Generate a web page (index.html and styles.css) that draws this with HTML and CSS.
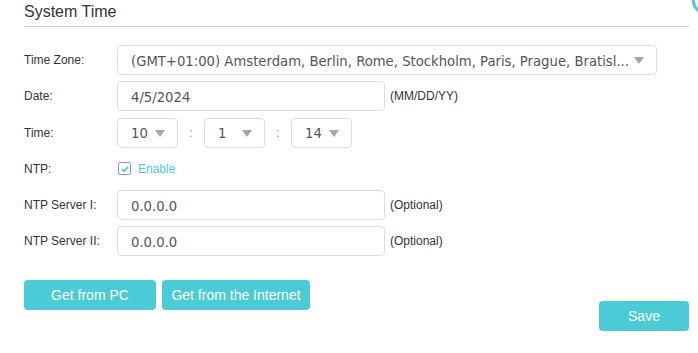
FILE: index.html
```html
<!DOCTYPE html>
<html lang="en">
<head>
  <meta charset="UTF-8">
  <title>System Time</title>
  <link rel="stylesheet" href="styles.css">
</head>
<body>

  <div class="panel">
    <!-- Header -->
    <h2 class="title">System Time</h2>
    <span class="help-icon"></span>

    <!-- Settings Form -->
    <div class="form">
      <div class="row">
        <label>Time Zone:</label>
        <div class="select wide">
          <span class="value">(GMT+01:00) Amsterdam, Berlin, Rome, Stockholm, Paris, Prague, Bratisl...</span>
          <span class="arrow"></span>
        </div>
      </div>

      <div class="row">
        <label>Date:</label>
        <div class="input">4/5/2024</div>
        <span class="hint">(MM/DD/YY)</span>
      </div>

      <div class="row">
        <label>Time:</label>
        <div class="select small">
          <span class="value">10</span>
          <span class="arrow"></span>
        </div>
        <span class="colon">:</span>
        <div class="select small">
          <span class="value">1</span>
          <span class="arrow"></span>
        </div>
        <span class="colon">:</span>
        <div class="select small">
          <span class="value">14</span>
          <span class="arrow"></span>
        </div>
      </div>

      <div class="row">
        <label>NTP:</label>
        <span class="checkbox">
          <svg width="10" height="10" viewBox="0 0 10 10"><path d="M2 5.2 L4.2 7.3 L8 2.8" fill="none" stroke="#4acbd6" stroke-width="1.8"/></svg>
        </span>
        <span class="check-label">Enable</span>
      </div>

      <div class="row">
        <label>NTP Server I:</label>
        <div class="input">0.0.0.0</div>
        <span class="hint">(Optional)</span>
      </div>

      <div class="row">
        <label>NTP Server II:</label>
        <div class="input">0.0.0.0</div>
        <span class="hint">(Optional)</span>
      </div>
    </div>

    <!-- Action Buttons -->
    <div class="actions">
      <a href="#" class="button pc">Get from PC</a>
      <a href="#" class="button internet">Get from the Internet</a>
    </div>

    <div class="footer">
      <a href="#" class="button save">Save</a>
    </div>
  </div>

</body>
</html>
```

FILE: styles.css
```css
/* Basic Styles */
body {
  font-family: "Liberation Sans", Arial, sans-serif;
  margin: 0;
  padding: 0;
  background-color: #fff;
  color: #333;
  overflow: hidden;
}

.panel {
  position: relative;
  width: 665px;
  padding: 0 9px 0 24px;
}

/* Header */
.title {
  margin: 0;
  padding-top: 3px;
  height: 23px;
  font-size: 16px;
  font-weight: normal;
  color: #333;
  border-bottom: 1px solid #ccc;
}

.help-icon {
  position: absolute;
  left: 692px;
  top: -12px;
  width: 20px;
  height: 20px;
  border: 3px solid #4acbd6;
  border-radius: 50%;
}

/* Form Rows */
.form {
  margin-top: 18px;
}

.row {
  display: flex;
  align-items: center;
  height: 30px;
  margin-bottom: 6.25px;
  font-size: 12px;
}

.row label {
  width: 93px;
  flex-shrink: 0;
}

.select,
.input {
  box-sizing: border-box;
  height: 30px;
  border: 1px solid #ddd;
  border-radius: 4px;
  display: flex;
  align-items: center;
  font-family: "DejaVu Sans Condensed", "DejaVu Sans", sans-serif;
  font-size: 14.7px;
  color: #555;
}

.select {
  position: relative;
  padding-left: 13px;
}

.select.wide {
  width: 540px;
}

.select.small {
  width: 61px;
}

.arrow {
  position: absolute;
  right: 12px;
  top: 11px;
  width: 0;
  height: 0;
  border-left: 5px solid transparent;
  border-right: 5px solid transparent;
  border-top: 7px solid #a5a5a5;
}

.input {
  width: 268px;
  padding-left: 13px;
}

.hint {
  margin-left: 5px;
}

.colon {
  width: 26px;
  text-align: center;
  color: #888;
}

/* Checkbox */
.checkbox {
  box-sizing: border-box;
  width: 13px;
  height: 13px;
  border: 1px solid #999;
  border-radius: 2px;
  margin-left: 1px;
  display: flex;
  align-items: center;
  justify-content: center;
}

.check-label {
  color: #4acbd6;
  margin-left: 7px;
}

/* Button Styling */
.actions {
  display: flex;
  gap: 6px;
  margin-top: 24px;
}

.button {
  display: inline-block;
  box-sizing: border-box;
  height: 30px;
  line-height: 30px;
  background-color: #4acbd6;
  color: white;
  font-size: 14px;
  text-align: center;
  text-decoration: none;
  border-radius: 4px;
}

.button.pc {
  width: 132px;
}

.button.internet {
  width: 148px;
}

.footer {
  display: flex;
  justify-content: flex-end;
  margin-top: -9px;
}

.button.save {
  width: 90px;
}
```
